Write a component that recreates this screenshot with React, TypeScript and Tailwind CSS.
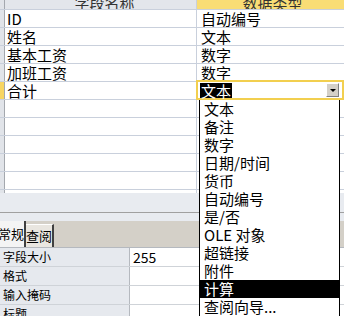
import React from 'react';

const font = { fontFamily: '"Noto Sans CJK SC", "Noto Sans", sans-serif' };

const fields = [
  { name: 'ID', type: '自动编号' },
  { name: '姓名', type: '文本' },
  { name: '基本工资', type: '数字' },
  { name: '加班工资', type: '数字' },
];

const typeOptions = [
  '文本',
  '备注',
  '数字',
  '日期/时间',
  '货币',
  '自动编号',
  '是/否',
  'OLE 对象',
  '超链接',
  '附件',
  '计算',
  '查阅向导...',
];

const props = ['字段大小', '格式', '输入掩码', '标题'];

const Row: React.FC<{ name?: string; type?: React.ReactNode }> = ({ name, type }) => (
  <div className="flex h-[18px] shrink-0 border-b border-[#c9d0dc]">
    <div className="w-[5px] shrink-0 border-r border-[#a4a8ae] bg-[#e1e4e9]" />
    <div className="w-[192px] shrink-0 border-r border-[#c9d0dc] pl-[2px] text-[15px] leading-[17px] text-black">
      {name}
    </div>
    <div className="flex-1 pl-[4px] text-[15px] leading-[17px] text-black">{type}</div>
  </div>
);

const App: React.FC = () => {
  return (
    <div className="relative h-[316px] w-[344px] overflow-hidden bg-[#e8ebf0]" style={font}>
      {/* Table design grid */}
      <div className="flex h-[193px] flex-col overflow-hidden bg-white">
        <div className="flex h-[10px] shrink-0 border-b border-[#c9d0dc]">
          <div className="w-[5px] shrink-0 border-r border-[#a4a8ae] bg-[#e1e4e9]" />
          <div className="flex w-[192px] shrink-0 items-end justify-center overflow-hidden border-r border-[#c9d0dc] bg-[#e3e6eb] text-[15px] leading-[17px] text-[#333]">
            <span className="mb-[-2px] pl-[8px]">字段名称</span>
          </div>
          <div className="flex flex-1 items-end justify-center overflow-hidden bg-[#f9dd75] text-[15px] leading-[17px] text-[#333]">
            <span className="mb-[-2px] pl-[4px]">数据类型</span>
          </div>
        </div>
        {fields.map((f) => (
          <Row key={f.name} name={f.name} type={f.type} />
        ))}
        {/* active row with combo box */}
        <div className="flex h-[18px] shrink-0 border-b border-[#c9d0dc]">
          <div className="w-[5px] shrink-0 border-r border-[#a4a8ae] bg-[#f7d562]" />
          <div className="w-[191px] shrink-0 pl-[2px] text-[15px] leading-[17px] text-black">合计</div>
          <div className="relative z-10 -mt-[2px] flex h-[20px] flex-1 items-center border-2 border-[#f2cf4f] bg-white pl-[2px] pr-[3px]">
            <span className="bg-black px-px text-[15px] leading-[15px] text-white">文本</span>
            <div className="ml-auto flex h-[14px] w-[13px] items-center justify-center border border-t-white border-l-white border-r-[#808080] border-b-[#808080] bg-[#d4d0c8]">
              <div className="h-0 w-0 border-x-[3px] border-t-[3px] border-x-transparent border-t-black" />
            </div>
          </div>
        </div>
        {Array.from({ length: 6 }).map((_, i) => (
          <Row key={i} />
        ))}
      </div>

      {/* Gap area */}
      <div className="h-[20px] border-b border-[#a0a0a0]" />

      {/* Property tabs */}
      <div className="mt-[8px] flex h-[26px] items-end bg-[#d4d0c8]">
        <div className="flex h-[26px] w-[26px] items-center justify-end overflow-hidden border-r-2 border-[#404040] bg-[#f4f4f4] text-[13px] text-black">
          <span className="whitespace-nowrap">常规</span>
        </div>
        <div className="flex h-[23px] w-[28px] items-center justify-center border-r-2 border-t border-[#404040] border-t-white bg-[#e9e6e0] text-[13px] text-black">
          查阅
        </div>
      </div>

      {/* Property grid */}
      <div className="flex flex-col border-t border-[#b5b9bf] bg-white">
        {props.map((p, i) => (
          <div key={p} className="flex h-[19px] border-b border-[#cfd3d8]">
            <div className="w-[130px] shrink-0 border-r border-[#b5b9bf] bg-[#e6e9ee] pl-[3px] text-[12px] leading-[18px] text-black">
              {p}
            </div>
            <div className="flex-1 pl-[3px] text-[14px] leading-[18px] text-black">{i === 0 ? '255' : ''}</div>
          </div>
        ))}
      </div>

      {/* Dropdown list */}
      <div className="absolute left-[199px] top-[99px] w-[141px] border border-black bg-white">
        {typeOptions.map((t) => (
          <div
            key={t}
            className={`h-[18px] pl-[4px] text-[15px] leading-[18px] ${t === '计算' ? 'bg-black text-white' : 'text-black'}`}
          >
            {t}
          </div>
        ))}
      </div>
    </div>
  );
};

export default App;
